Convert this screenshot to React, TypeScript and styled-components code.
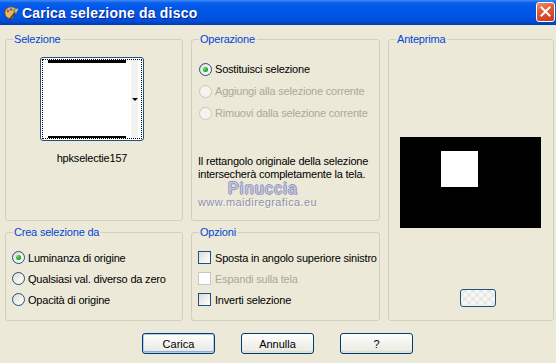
import React from 'react';
import styled, { createGlobalStyle } from 'styled-components';

const GlobalStyle = createGlobalStyle`
	html, body {
		margin: 0;
		padding: 0;
		background: #ece9d8;
	}
	body {
		font-family: "Liberation Sans", Arial, sans-serif;
		font-size: 11px;
		letter-spacing: -0.2px;
		color: #000;
	}
`;

const Window = styled.div`
	width: 556px;
	height: 363px;
	background: #ece9d8;
	display: flex;
	flex-direction: column;
	overflow: hidden;
`;

const TitleBar = styled.div`
	height: 25px;
	flex: none;
	display: flex;
	align-items: center;
	padding-left: 3px;
	box-sizing: border-box;
	background: linear-gradient(
		180deg,
		#3d8cf5 0px,
		#0a5ded 3px,
		#0058e8 8px,
		#0054e3 16px,
		#004fdb 21px,
		#0044c4 23px,
		#0b3aa6 25px
	);
`;

const Title = styled.span`
	margin-left: 3px;
	flex: 1;
	color: #fff;
	font-size: 14px;
	font-weight: bold;
	letter-spacing: 0.2px;
	text-shadow: 1px 1px 0 #0a1f8a;
`;

const CloseButton = styled.div`
	width: 19px;
	height: 20px;
	margin: 0 1px 2px 0;
	box-sizing: border-box;
	border: 1px solid #fff;
	border-radius: 3px;
	background: linear-gradient(160deg, #f0906c 0%, #e05a35 40%, #c9391a 100%);
	display: flex;
	align-items: center;
	justify-content: center;
`;

const Body = styled.div`
	flex: 1;
	display: flex;
	flex-direction: column;
	padding: 8px 3px 0 5px;
`;

const Groups = styled.div`
	display: grid;
	grid-template-columns: 178px 189px 166px;
	grid-template-rows: 188px 95px;
	column-gap: 8px;
	row-gap: 5px;
`;

const Group = styled.fieldset<{ $col: number; $row: string }>`
	margin: 0;
	min-width: 0;
	box-sizing: border-box;
	border: 1px solid #d0d0bf;
	border-radius: 3px;
	padding: 0 6px 0 6px;
	grid-column: ${(p) => p.$col};
	grid-row: ${(p) => p.$row};
	display: flex;
	flex-direction: column;
`;

const Legend = styled.legend`
	color: #0046d5;
	padding: 0 2px 0 1px;
	margin-left: 1px;
	line-height: 13px;
`;

const ThumbColumn = styled.div`
	display: flex;
	flex-direction: column;
	align-items: center;
	padding-top: 11px;
	padding-right: 4px;
`;

const Thumb = styled.div`
	width: 104px;
	height: 84px;
	box-sizing: border-box;
	border: 1px solid #1c5180;
	border-radius: 3px;
	background: #fff;
	padding: 1px;
	display: flex;
`;

const FocusRect = styled.div`
	flex: 1;
	border: 1px dotted #000;
	display: flex;
	padding: 0 3px 0 5px;
`;

const ThumbImage = styled.div`
	flex: 1;
	border-top: 3px solid #000;
	border-bottom: 2px solid #000;
	background: #fff;
`;

const DropStrip = styled.div`
	width: 7px;
	margin-left: 5px;
	background: #f2f2f0;
	display: flex;
	align-items: center;
	justify-content: center;
`;

const DropArrow = styled.span`
	width: 0;
	height: 0;
	border-left: 3px solid transparent;
	border-right: 3px solid transparent;
	border-top: 3px solid #000;
`;

const Caption = styled.div`
	margin-top: 11px;
	line-height: 13px;
`;

const OptionList = styled.div<{ $top: number; $left: number }>`
	display: flex;
	flex-direction: column;
	padding-top: ${(p) => p.$top}px;
	padding-left: ${(p) => p.$left}px;
`;

const Option = styled.div<{ $h: number; $disabled?: boolean }>`
	height: ${(p) => p.$h}px;
	display: flex;
	align-items: center;
	gap: 3px;
	color: ${(p) => (p.$disabled ? '#aca899' : '#000')};
	white-space: nowrap;
`;

const Radio = styled.span<{ $checked?: boolean; $disabled?: boolean }>`
	width: 13px;
	height: 13px;
	flex: none;
	box-sizing: border-box;
	border-radius: 50%;
	border: 1px solid ${(p) => (p.$disabled ? '#cac8bb' : '#1c5180')};
	background: ${(p) =>
		p.$disabled ? '#f4f3ee' : 'linear-gradient(135deg, #dcd9cd 0%, #f4f3ee 60%, #ffffff 100%)'};
	display: flex;
	align-items: center;
	justify-content: center;
	&::after {
		content: '';
		display: ${(p) => (p.$checked ? 'block' : 'none')};
		width: 5px;
		height: 5px;
		border-radius: 50%;
		background: radial-gradient(circle at 35% 35%, #6fe06f 0%, #22a322 60%, #138a13 100%);
	}
`;

const Check = styled.span<{ $disabled?: boolean }>`
	width: 13px;
	height: 13px;
	flex: none;
	box-sizing: border-box;
	border: 1px solid ${(p) => (p.$disabled ? '#cac8bb' : '#1c5180')};
	background: ${(p) =>
		p.$disabled ? '#fff' : 'linear-gradient(135deg, #dcdcd7 0%, #f2f2ee 60%, #ffffff 100%)'};
	margin-right: 1px;
`;

const Note = styled.div`
	margin-top: 31px;
	line-height: 13px;
	white-space: nowrap;
`;

const Watermark = styled.div`
	padding-left: 30px;
	margin-top: 1px;
	font-family: "Liberation Sans", Arial, sans-serif;
	font-size: 16px;
	letter-spacing: 1.2px;
	line-height: 14px;
	color: #c3c6e4;
	text-shadow:
		1px 0 0 #9397b8,
		-1px 0 0 #9397b8,
		0 1px 0 #9397b8,
		0 -1px 0 #9397b8;
`;

const WatermarkUrl = styled.div`
	font-family: "Liberation Sans", Arial, sans-serif;
	font-size: 11px;
	letter-spacing: 0.4px;
	line-height: 12px;
	color: #8f92ab;
	text-shadow: 1px 1px 0 #f6f4ee;
`;

const PreviewArea = styled.div`
	flex: 1;
	display: flex;
	flex-direction: column;
	align-items: center;
	padding-top: 91px;
`;

const Canvas = styled.div`
	width: 141px;
	height: 91px;
	box-sizing: border-box;
	background: #000;
	padding: 14px 0 0 41px;
	margin-left: -2px;
`;

const CanvasSelection = styled.div`
	width: 37px;
	height: 36px;
	background: #fff;
`;

const SmallButton = styled.div`
	width: 36px;
	height: 18px;
	box-sizing: border-box;
	margin: 0 0 13px 65px;
	align-self: flex-start;
	border: 1px solid #1c5180;
	border-radius: 3px;
	background:
		repeating-conic-gradient(#e9e8e2 0% 25%, #f7f7f4 0% 50%) 10px 3px / 8px 8px,
		#f4f4f0;
`;

const Footer = styled.div`
	display: flex;
	justify-content: center;
	gap: 26px;
	padding-top: 12px;
	padding-right: 3px;
`;

const Button = styled.button<{ $default?: boolean }>`
	width: 73px;
	height: 21px;
	box-sizing: border-box;
	border: 1px solid #003c74;
	border-radius: 3px;
	font: inherit;
	color: #000;
	padding: 0;
	background: linear-gradient(180deg, #ffffff 0%, #f4f4f0 45%, #ecebe6 85%, #d6d0c5 100%);
	box-shadow: ${(p) =>
		p.$default ? 'inset 0 0 0 1px #b6cdf2, inset 0 -1px 0 1px #8caee4' : 'inset 0 -1px 0 #e3e0d4'};
`;

function AppIcon() {
	return (
		<svg width="16" height="16" viewBox="0 0 16 16">
			<path
				d="M2 8.5C1.5 4.5 5 1.5 9 2c3.5.4 5.5 3 4.8 5.5-.5 1.8-2.5 1.2-3.4 2.2-.8.9.4 2.6-1 3.6C7 14.6 2.6 12.8 2 8.5z"
				fill="#e9b366"
				stroke="#8a5424"
				strokeWidth="0.8"
			/>
			<circle cx="5" cy="6" r="1.2" fill="#e23b2b" />
			<circle cx="8" cy="4.4" r="1.2" fill="#2c62e0" />
			<circle cx="11.2" cy="5.4" r="1.1" fill="#2ea83a" />
			<circle cx="4.6" cy="9.4" r="1.1" fill="#f1d21d" />
			<path d="M6.5 14.5l7-9" stroke="#5a3a1c" strokeWidth="1.4" strokeLinecap="round" />
			<path d="M12.6 6.6l1.6-2.2" stroke="#c0c0c0" strokeWidth="1.8" strokeLinecap="round" />
		</svg>
	);
}

function CloseIcon() {
	return (
		<svg width="11" height="11" viewBox="0 0 11 11">
			<path d="M1.5 1.5l8 8M9.5 1.5l-8 8" stroke="#fff" strokeWidth="2" strokeLinecap="square" />
		</svg>
	);
}

export default function App() {
	return (
		<>
			<GlobalStyle />
			<Window>
				<TitleBar>
					<AppIcon />
					<Title>Carica selezione da disco</Title>
					<CloseButton>
						<CloseIcon />
					</CloseButton>
				</TitleBar>
				<Body>
					<Groups>
						<Group $col={1} $row="1">
							<Legend>Selezione</Legend>
							<ThumbColumn>
								<Thumb>
									<FocusRect>
										<ThumbImage />
										<DropStrip>
											<DropArrow />
										</DropStrip>
									</FocusRect>
								</Thumb>
								<Caption>hpkselectie157</Caption>
							</ThumbColumn>
						</Group>
						<Group $col={2} $row="1">
							<Legend>Operazione</Legend>
							<OptionList $top={12} $left={1}>
								<Option $h={22}>
									<Radio $checked />
									Sostituisci selezione
								</Option>
								<Option $h={22} $disabled>
									<Radio $disabled />
									Aggiungi alla selezione corrente
								</Option>
								<Option $h={22} $disabled>
									<Radio $disabled />
									Rimuovi dalla selezione corrente
								</Option>
							</OptionList>
							<Note>
								Il rettangolo originale della selezione
								<br />
								intersecherà completamente la tela.
							</Note>
							<Watermark>Pinuccia</Watermark>
							<WatermarkUrl>www.maidiregrafica.eu</WatermarkUrl>
						</Group>
						<Group $col={3} $row="1 / span 2">
							<Legend>Anteprima</Legend>
							<PreviewArea>
								<Canvas>
									<CanvasSelection />
								</Canvas>
							</PreviewArea>
							<SmallButton />
						</Group>
						<Group $col={1} $row="2">
							<Legend>Crea selezione da</Legend>
							<OptionList $top={8} $left={0}>
								<Option $h={21}>
									<Radio $checked />
									Luminanza di origine
								</Option>
								<Option $h={21}>
									<Radio />
									Qualsiasi val. diverso da zero
								</Option>
								<Option $h={21}>
									<Radio />
									Opacità di origine
								</Option>
							</OptionList>
						</Group>
						<Group $col={2} $row="2">
							<Legend>Opzioni</Legend>
							<OptionList $top={8} $left={0}>
								<Option $h={21}>
									<Check />
									Sposta in angolo superiore sinistro
								</Option>
								<Option $h={21} $disabled>
									<Check $disabled />
									Espandi sulla tela
								</Option>
								<Option $h={21}>
									<Check />
									Inverti selezione
								</Option>
							</OptionList>
						</Group>
					</Groups>
					<Footer>
						<Button $default>Carica</Button>
						<Button>Annulla</Button>
						<Button>?</Button>
					</Footer>
				</Body>
			</Window>
		</>
	);
}
